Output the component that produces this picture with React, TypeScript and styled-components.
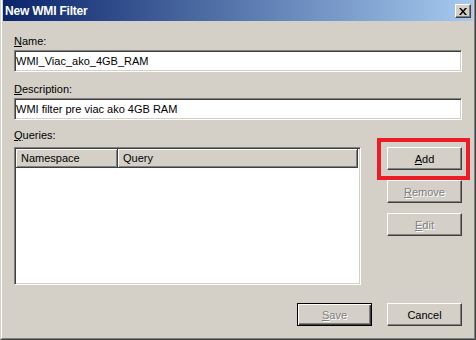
import React from 'react'
import styled, { createGlobalStyle } from 'styled-components'

const GlobalStyle = createGlobalStyle`
  html, body {
    margin: 0;
    padding: 0;
    background: #d4d0c8;
  }
  body {
    font-family: "Liberation Sans", Arial, sans-serif;
    font-size: 11px;
    color: #000;
  }
`

const App: React.FC = () => {
  return (
    <>
      <GlobalStyle />
      <StyledWindow>
        <StyledFrame>
          <StyledTitleBar>
            <StyledTitle>New WMI Filter</StyledTitle>
            <StyledCloseBtn aria-label="Close">
              <svg width="8" height="7" viewBox="0 0 8 7">
                <path d="M0 0h2l2 2.5L6 0h2L5 3.5 8 7H6L4 4.5 2 7H0l3-3.5z" fill="#000" />
              </svg>
            </StyledCloseBtn>
          </StyledTitleBar>

          <StyledBody>
            <StyledLabel>
              <u>N</u>ame:
            </StyledLabel>
            <StyledInput readOnly defaultValue="WMI_Viac_ako_4GB_RAM" />

            <StyledLabel $gap={11}>
              <u>D</u>escription:
            </StyledLabel>
            <StyledInput readOnly defaultValue="WMI filter pre viac ako 4GB RAM" />

            <StyledLabel $gap={9} $after={5}>
              <u>Q</u>ueries:
            </StyledLabel>

            <StyledQueries>
              <StyledList>
                <StyledListHeader>
                  <StyledHeaderCell $width={102}>Namespace</StyledHeaderCell>
                  <StyledHeaderCell>Query</StyledHeaderCell>
                </StyledListHeader>
              </StyledList>

              <StyledSide>
                <StyledMarked>
                  <StyledButton>
                    <u>A</u>dd
                  </StyledButton>
                  <StyledMark />
                </StyledMarked>
                <StyledButton disabled>
                  <u>R</u>emove
                </StyledButton>
                <StyledButton disabled>
                  <u>E</u>dit
                </StyledButton>
              </StyledSide>
            </StyledQueries>

            <StyledFooter>
              <StyledButton disabled $default>
                <u>S</u>ave
              </StyledButton>
              <StyledButton>Cancel</StyledButton>
            </StyledFooter>
          </StyledBody>
        </StyledFrame>
      </StyledWindow>
    </>
  )
}

const StyledWindow = styled.div`
  width: 476px;
  height: 340px;
  box-sizing: border-box;
  background: #d4d0c8;
  border-left: 1px solid #d4d0c8;
  border-right: 1px solid #404040;
  border-bottom: 1px solid #404040;
  display: flex;
  flex-direction: column;
`
const StyledFrame = styled.div`
  flex: 1;
  border-left: 1px solid #fff;
  border-right: 1px solid #808080;
  border-bottom: 1px solid #808080;
  padding: 0 1px 1px;
  display: flex;
  flex-direction: column;
`
const StyledTitleBar = styled.div`
  height: 21px;
  display: flex;
  align-items: center;
  justify-content: space-between;
  padding: 0 2px 0 2px;
  background: linear-gradient(to right, #0a246a, #a6caf0);
`
const StyledTitle = styled.span`
  color: #fff;
  font-weight: bold;
  font-size: 12px;
  letter-spacing: -0.2px;
  line-height: 14px;
`
const StyledCloseBtn = styled.button`
  width: 16px;
  height: 14px;
  padding: 0;
  margin-top: 1px;
  box-sizing: border-box;
  background: #d4d0c8;
  border: 1px solid;
  border-color: #fff #404040 #404040 #fff;
  box-shadow: inset -1px -1px #808080;
  display: flex;
  align-items: center;
  justify-content: center;
`
const StyledBody = styled.div`
  flex: 1;
  display: flex;
  flex-direction: column;
  padding: 14px 11px 0;
`
const StyledLabel = styled.div<{ $gap?: number; $after?: number }>`
  line-height: 13px;
  height: 13px;
  margin-top: ${(p) => p.$gap ?? 0}px;
  margin-bottom: ${(p) => p.$after ?? 2}px;
`
const StyledInput = styled.input`
  height: 22px;
  box-sizing: border-box;
  margin: 0;
  padding: 0 1px;
  font-family: "Liberation Sans", Arial, sans-serif;
  font-size: 11px;
  color: #000;
  background: #fff;
  border: 1px solid;
  border-color: #808080 #fff #fff #808080;
  box-shadow: inset 1px 1px #404040, inset -1px -1px #d4d0c8;
  outline: none;
`
const StyledQueries = styled.div`
  display: flex;
  justify-content: space-between;
`
const StyledList = styled.div`
  width: 347px;
  height: 138px;
  box-sizing: border-box;
  background: #fff;
  border: 1px solid;
  border-color: #808080 #fff #fff #808080;
  box-shadow: inset 1px 1px #404040, inset -1px -1px #d4d0c8;
  padding: 1px 2px 1px 1px;
`
const StyledListHeader = styled.div`
  display: flex;
  height: 19px;
`
const StyledHeaderCell = styled.div<{ $width?: number }>`
  ${(p) => (p.$width ? `width: ${p.$width}px;` : 'flex: 1;')}
  box-sizing: border-box;
  background: #d4d0c8;
  box-shadow: inset 1px 1px #fff, inset -1px -1px #808080;
  border-right: 1px solid #404040;
  border-bottom: 1px solid #404040;
  padding-left: 5px;
  display: flex;
  align-items: center;
`
const StyledSide = styled.div`
  display: flex;
  flex-direction: column;
  gap: 10px;
`
const StyledMarked = styled.div`
  position: relative;
  display: flex;
`
const StyledMark = styled.div`
  position: absolute;
  top: -9px;
  left: -10px;
  right: -8px;
  bottom: -10px;
  border: 4px solid #ec1c24;
  pointer-events: none;
`
const StyledButton = styled.button<{ $default?: boolean }>`
  width: 75px;
  height: 23px;
  box-sizing: border-box;
  margin: 0;
  padding: 0;
  font-family: "Liberation Sans", Arial, sans-serif;
  font-size: 11px;
  color: #000;
  background: #d4d0c8;
  border: 1px solid;
  border-color: ${(p) => (p.$default ? '#000' : '#fff #404040 #404040 #fff')};
  box-shadow: ${(p) =>
    p.$default
      ? 'inset 1px 1px #fff, inset -1px -1px #404040, inset -2px -2px #808080'
      : 'inset -1px -1px #808080'};
  &:disabled {
    color: #808080;
    text-shadow: 1px 1px 0 #fff;
  }
`
const StyledFooter = styled.div`
  display: flex;
  justify-content: flex-end;
  gap: 15px;
  margin-top: 18px;
`

export default App
